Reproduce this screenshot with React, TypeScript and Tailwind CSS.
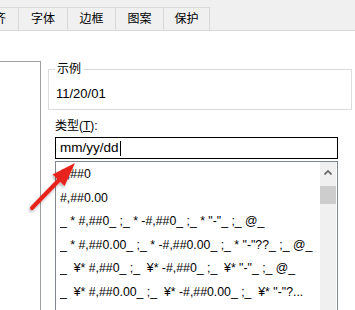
import React from 'react';

const tabs = [
  { label: '对齐', cls: '-ml-[31px] w-[49px]' },
  { label: '字体', cls: 'w-[49px]' },
  { label: '边框', cls: 'w-[48px]' },
  { label: '图案', cls: 'w-[48px]' },
  { label: '保护', cls: 'w-[47px] border-r' },
];

const formats = [
  '#,##0',
  '#,##0.00',
  '_ * #,##0_ ;_ * -#,##0_ ;_ * "-"_ ;_ @_',
  '_ * #,##0.00_ ;_ * -#,##0.00_ ;_ * "-"??_ ;_ @_',
  '_ \u00a0¥* #,##0_ ;_ \u00a0¥* -#,##0_ ;_ \u00a0¥* "-"_ ;_ @_',
  '_ \u00a0¥* #,##0.00_ ;_ \u00a0¥* -#,##0.00_ ;_ \u00a0¥* "-"?...',
  '#,##0;-#,##0',
  '#,##0;[红色]-#,##0',
];

export default function App() {
  return (
    <div
      className="relative h-[310px] w-[355px] overflow-hidden bg-white text-black"
      style={{ fontFamily: '"Liberation Sans", "Noto Sans CJK SC", sans-serif' }}
    >
      {/* tab strip */}
      <div className="flex h-[31px] items-end border-b border-[#d9d9d9] bg-[#f0f0f0] pt-[7px]">
        {tabs.map(t => (
          <div
            key={t.label}
            className={`flex h-full shrink-0 items-center justify-center border-l border-t border-[#d9d9d9] text-[12px] ${t.cls}`}
          >
            {t.label}
          </div>
        ))}
      </div>

      <div className="flex h-[279px] overflow-hidden">
        {/* left category list (cut off) */}
        <div className="mt-[30px] w-[41px] shrink-0 border-r border-t border-[#a0a0a0]" />

        <div className="ml-[7px] flex w-[304px] shrink-0 flex-col">
          {/* sample group */}
          <div className="relative mt-[38px] h-[41px] shrink-0 border border-[#dcdcdc] pl-[7px] pt-[16px] text-[13px] leading-[16px]">
            <span className="absolute -top-[9px] left-[6px] bg-white px-[2px] text-[12px] leading-[16px]">示例</span>
            11/20/01
          </div>

          <div className="mt-[8px] shrink-0 pl-[7px] text-[12px] leading-[16px]">
            类型(<span className="underline underline-offset-1">T</span>):
          </div>

          <div className="ml-[7px] mt-[3px] flex h-[22px] w-[283px] shrink-0 items-center border border-black pl-[4px] text-[13.5px]">
            mm/yy/dd
            <span className="ml-[1px] h-[15px] w-px bg-black" />
          </div>

          <div className="ml-[7px] mt-[2px] flex h-[200px] w-[283px] shrink-0 overflow-hidden border border-[#828790]">
            <div className="min-w-0 flex-1 pl-[4px] pt-[1px] text-[12.3px]">
              {formats.map(f => (
                <div key={f} className="h-[23.5px] overflow-hidden whitespace-nowrap leading-[23px]">
                  {f}
                </div>
              ))}
            </div>
            <div className="mr-[1px] flex w-[16px] shrink-0 flex-col bg-[#f0f0f0]">
              <div className="flex h-[20px] items-center justify-center">
                <svg width="8" height="5" viewBox="0 0 8 5">
                  <path d="M0.5 4.5 L4 1 L7.5 4.5" fill="none" stroke="#606060" strokeWidth="1.6" />
                </svg>
              </div>
              <div className="mt-[4px] h-[18px] bg-[#cdcdcd]" />
            </div>
          </div>
        </div>
      </div>

      {/* red annotation arrow */}
      <svg className="pointer-events-none absolute left-0 top-0" width="355" height="310" viewBox="0 0 355 310">
        <defs>
          <filter id="sh" x="-50%" y="-50%" width="200%" height="200%">
            <feDropShadow dx="-1" dy="2" stdDeviation="1.5" floodColor="#000" floodOpacity="0.3" />
          </filter>
        </defs>
        <g filter="url(#sh)">
          <line x1="32" y1="208" x2="61" y2="178" stroke="#e8231c" strokeWidth="4" strokeLinecap="round" />
          <polygon points="75,163 52.6,174.5 64.6,186" fill="#e8231c" />
        </g>
      </svg>
    </div>
  );
}
